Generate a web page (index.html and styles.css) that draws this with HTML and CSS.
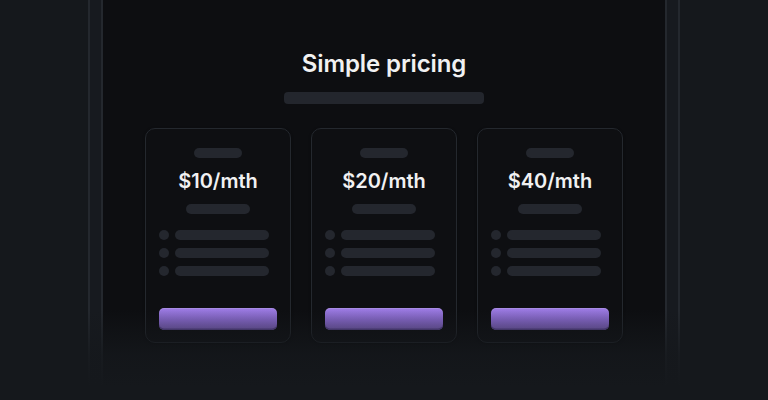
FILE: index.html
```html
<!DOCTYPE html>
<html lang="en">
<head>
<meta charset="utf-8">
<title>Simple pricing</title>
<link rel="stylesheet" href="styles.css">
</head>
<body>
<div class="frame">
  <div class="panel">
    <h1 class="title">Simple pricing</h1>
    <div class="subtitle-bar"></div>
    <div class="cards">
      <div class="card">
        <div class="pill pill-sm"></div>
        <div class="price">$10/mth</div>
        <div class="pill pill-md"></div>
        <ul class="features">
          <li><span class="dot"></span><span class="line"></span></li>
          <li><span class="dot"></span><span class="line"></span></li>
          <li><span class="dot"></span><span class="line"></span></li>
        </ul>
        <div class="btn"></div>
      </div>
      <div class="card">
        <div class="pill pill-sm"></div>
        <div class="price">$20/mth</div>
        <div class="pill pill-md"></div>
        <ul class="features">
          <li><span class="dot"></span><span class="line"></span></li>
          <li><span class="dot"></span><span class="line"></span></li>
          <li><span class="dot"></span><span class="line"></span></li>
        </ul>
        <div class="btn"></div>
      </div>
      <div class="card">
        <div class="pill pill-sm"></div>
        <div class="price">$40/mth</div>
        <div class="pill pill-md"></div>
        <ul class="features">
          <li><span class="dot"></span><span class="line"></span></li>
          <li><span class="dot"></span><span class="line"></span></li>
          <li><span class="dot"></span><span class="line"></span></li>
        </ul>
        <div class="btn"></div>
      </div>
    </div>
  </div>
</div>
<div class="fade"></div>
</body>
</html>
```

FILE: styles.css
```css
* { box-sizing: border-box; }

html, body {
  margin: 0;
  padding: 0;
  height: 400px;
  overflow: hidden;
}

body {
  background: #15181c;
  font-family: Inter, "Noto Sans", sans-serif;
  display: flex;
  justify-content: center;
}

.frame {
  width: 592px;
  height: 400px;
  border-left: 2px solid #24282e;
  border-right: 2px solid #24282e;
  background: #171a1f;
  padding: 0 11px;
}

.panel {
  height: 100%;
  border-left: 2px solid #24282e;
  border-right: 2px solid #24282e;
  background: #0d0e11;
  padding-top: 48px;
  display: flex;
  flex-direction: column;
  align-items: center;
}

.title {
  margin: 0;
  font-size: 24px;
  line-height: 32px;
  font-weight: 600;
  color: #f1f1f2;
  letter-spacing: -0.1px;
}

.subtitle-bar {
  width: 200px;
  height: 12px;
  border-radius: 4px;
  background: #23262d;
  margin-top: 12px;
}

.cards {
  display: flex;
  gap: 20px;
  margin-top: 24px;
}

.card {
  width: 146px;
  height: 215px;
  border: 1.5px solid #24282e;
  border-radius: 10px;
  background: #0e0f12;
  padding: 19px 13px 12px;
  display: flex;
  flex-direction: column;
  align-items: center;
  box-shadow: 0 1px 3px rgba(0,0,0,0.4);
}

.pill {
  height: 10px;
  border-radius: 5px;
  background: #24272e;
}

.pill-sm { width: 48px; }
.pill-md { width: 64px; }

.price {
  margin-top: 9px;
  font-size: 20px;
  line-height: 28px;
  font-weight: 600;
  color: #f1f1f2;
  margin-bottom: 9px;
}

.features {
  list-style: none;
  margin: 16px 0 0;
  padding: 0;
  width: 100%;
  display: flex;
  flex-direction: column;
  gap: 8px;
}

.features li {
  display: flex;
  gap: 6px;
  height: 10px;
}

.dot {
  width: 10px;
  height: 10px;
  border-radius: 50%;
  background: #24272e;
}

.line {
  width: 94px;
  height: 10px;
  border-radius: 5px;
  background: #24272e;
}

.btn {
  margin-top: auto;
  width: 118px;
  height: 22px;
  border-radius: 5px;
  background: linear-gradient(180deg, #9c7be2 0%, #8a6ad0 60%, #8164c2 100%);
  box-shadow: inset 0 -1.5px 0 #5f4896, inset 0 1px 0 rgba(255,255,255,0.12);
}

.fade {
  position: absolute;
  left: 0;
  right: 0;
  bottom: 0;
  height: 90px;
  background: linear-gradient(180deg, rgba(21,24,28,0) 0%, rgba(21,24,28,0.35) 20%, rgba(21,24,28,0.8) 50%, #15181c 85%);
  pointer-events: none;
}
```
